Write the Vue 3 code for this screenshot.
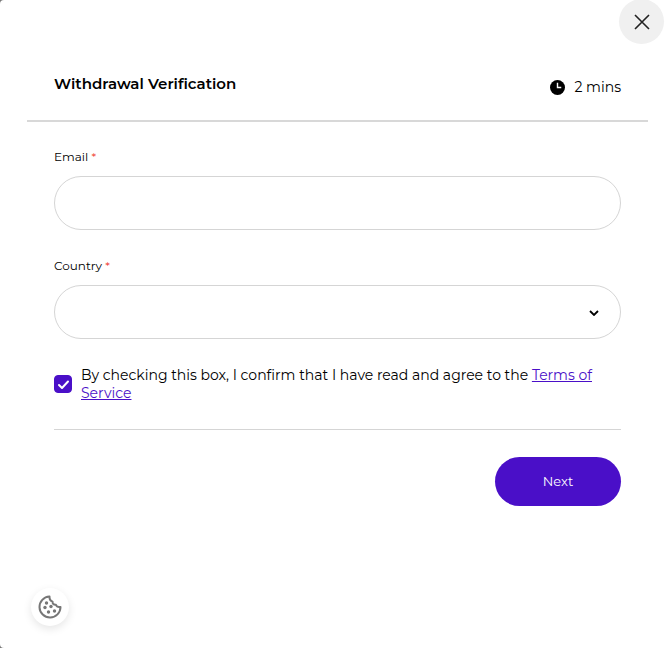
<script setup>
import { ref } from 'vue'

const email = ref('')
const country = ref('')
const agreed = ref(true)
const countries = ['Australia', 'Canada', 'Germany', 'United Kingdom', 'United States']
</script>

<template>
  <main class="modal">
    <button class="close" type="button" aria-label="Close">
      <svg width="16" height="16" viewBox="0 0 16 16" fill="none" stroke="#222" stroke-width="1.6">
        <path d="M1 1l14 14M15 1L1 15" />
      </svg>
    </button>

    <header class="header">
      <h1 class="title">Withdrawal Verification</h1>
      <div class="duration">
        <svg width="15" height="15" viewBox="0 0 16 16">
          <circle cx="8" cy="8" r="8" fill="#000" />
          <path d="M8 3v5h4" fill="none" stroke="#fff" stroke-width="1.5" />
        </svg>
        <span>2 mins</span>
      </div>
    </header>

    <form class="form" @submit.prevent>
      <div class="field">
        <label for="email">Email <span class="required">*</span></label>
        <input id="email" v-model="email" class="control" type="email" />
      </div>

      <div class="field">
        <label for="country">Country <span class="required">*</span></label>
        <div class="select-wrap">
          <select id="country" v-model="country" class="control">
            <option value=""></option>
            <option v-for="name in countries" :key="name" :value="name">{{ name }}</option>
          </select>
          <svg class="chevron" width="10" height="6" viewBox="0 0 10 6" fill="none" stroke="#000" stroke-width="1.8">
            <path d="M1 1l4 4 4-4" />
          </svg>
        </div>
      </div>

      <div class="agreement">
        <span class="check">
          <input id="terms" v-model="agreed" type="checkbox" />
          <svg width="18" height="18" viewBox="0 0 18 18" fill="none" stroke="#fff" stroke-width="2" stroke-linecap="round" stroke-linejoin="round">
            <path d="M5 10l3 3 6-6.500" />
          </svg>
        </span>
        <label for="terms">
          By checking this box, I confirm that I have read and agree to the
          <a href="#terms">Terms of Service</a>
        </label>
      </div>

      <div class="actions">
        <button class="next" type="submit">Next</button>
      </div>
    </form>

    <button class="cookies" type="button" aria-label="Cookie settings">
      <svg width="24" height="24" viewBox="0 0 24 24" fill="none" stroke="#777" stroke-width="2" stroke-linejoin="round">
        <path d="M11.500 1.500A10.500 10.500 0 1 0 22.500 12c-2.300.4-4-.4-4.600-2.200-2.300.2-3.600-1.100-3.300-3.200-2.200-.7-3.200-2.600-3.100-5.100z" />
        <g fill="#777" stroke="none">
          <circle cx="8.500" cy="8" r="1.700" />
          <circle cx="7" cy="12.500" r="1.700" />
          <circle cx="13" cy="11.500" r="1.700" />
          <circle cx="10.500" cy="17" r="1.700" />
          <circle cx="16.500" cy="16" r="1.700" />
        </g>
      </svg>
    </button>
  </main>
</template>

<style>
body {
  margin: 0;
  background: #777;
}
</style>

<style scoped>
.modal {
  position: relative;
  box-sizing: border-box;
  min-height: 100vh;
  padding: 54px 23px 22px 27px;
  display: flex;
  flex-direction: column;
  background: #fff;
  border-radius: 4px 0 0 4px;
  color: #000;
  font-family: Montserrat, Inter, sans-serif;
  font-size: 14px;
}

button {
  border: none;
  padding: 0;
  cursor: pointer;
  font-family: inherit;
}

.close {
  position: absolute;
  top: -1px;
  right: 7px;
  width: 45px;
  height: 45px;
  display: flex;
  align-items: center;
  justify-content: center;
  background: #f0f0f0;
  border-radius: 50%;
}

.header {
  display: flex;
  align-items: center;
  justify-content: space-between;
  height: 66px;
  padding: 0 27px;
  border-bottom: 2px solid #d8d8d8;
}

.title {
  margin: 0 0 6px;
  font-size: 15px;
  font-weight: 600;
  line-height: 20px;
}

.duration {
  display: flex;
  align-items: center;
  gap: 9px;
}

.form {
  padding: 26px 27px 0;
}

.field {
  margin-bottom: 27px;
}

.field label {
  display: block;
  margin-bottom: 10px;
  font-size: 12px;
  line-height: 18px;
}

.required {
  color: #f04438;
}

.control {
  display: block;
  box-sizing: border-box;
  width: 100%;
  height: 54px;
  padding: 0 27px;
  background: #fff;
  border: 1px solid #d5d5d5;
  border-radius: 27px;
  color: #000;
  font-family: inherit;
  font-size: 14px;
  appearance: none;
}

.select-wrap {
  position: relative;
}

.chevron {
  position: absolute;
  top: 25px;
  right: 22px;
  pointer-events: none;
}

.agreement {
  display: flex;
  align-items: center;
  gap: 9px;
  padding-bottom: 27px;
  border-bottom: 1px solid #d5d5d5;
  line-height: 18px;
}

.check {
  position: relative;
  flex: none;
  width: 18px;
  height: 18px;
}

.check input {
  display: block;
  width: 18px;
  height: 18px;
  margin: 0;
  border: 1px solid #4a0fc8;
  border-radius: 4px;
  appearance: none;
}

.check input:checked {
  background: #4a0fc8;
}

.check svg {
  position: absolute;
  inset: 0;
  pointer-events: none;
}

.agreement a {
  color: #4a0fc8;
}

.actions {
  display: flex;
  justify-content: flex-end;
  margin-top: 27px;
}

.next {
  width: 126px;
  height: 49px;
  padding-bottom: 2px;
  background: #4a0fc8;
  border-radius: 25px;
  color: #fff;
  font-size: 13px;
}

.cookies {
  width: 38px;
  height: 38px;
  margin-top: auto;
  margin-left: 4px;
  display: flex;
  align-items: center;
  justify-content: center;
  background: #fff;
  border-radius: 50%;
  box-shadow: 0 3px 8px rgba(0, 0, 0, 0.1);
}
</style>
